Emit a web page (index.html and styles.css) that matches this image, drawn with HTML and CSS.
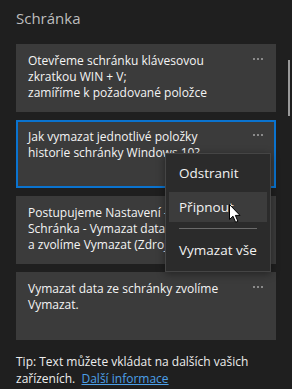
FILE: index.html
```html
<!DOCTYPE html>
<html lang="cs">
<head>
<meta charset="utf-8">
<link rel="stylesheet" href="styles.css">
</head>
<body>
<div class="panel">
  <main class="content">
    <h1 class="title">Schránka</h1>
    <ul class="clips">
      <li class="clip">
        <p class="clip-text">Otevřeme schránku klávesovou zkratkou WIN + V;<br>zamíříme k požadované položce</p>
        <span class="dots"><i></i><i></i><i></i></span>
      </li>
      <li class="clip clip-selected">
        <p class="clip-text">Jak vymazat jednotlivé položky historie schránky Windows 10?</p>
        <span class="dots"><i></i><i></i><i></i></span>
        <div class="menu">
          <div class="menu-item">Odstranit</div>
          <div class="menu-item menu-item-hover">Připnout</div>
          <div class="menu-sep"></div>
          <div class="menu-item">Vymazat vše</div>
        </div>
        <svg class="cursor" width="13" height="21" viewBox="0 0 13 21"><path d="M1.5 1.5 V16.5 L5 13.2 L7.6 19.3 L9.9 18.3 L7.4 12.4 H12 Z" fill="#fff" stroke="#000" stroke-width="1" stroke-linejoin="miter"/></svg>
      </li>
      <li class="clip">
        <p class="clip-text clamp">Postupujeme Nastavení - Systém - Schránka - Vymazat data ze schránky a zvolíme Vymazat (Zdroj: Microsoft)</p>
        <span class="dots"><i></i><i></i><i></i></span>
      </li>
      <li class="clip">
        <p class="clip-text">Vymazat data ze schránky zvolíme Vymazat.</p>
        <span class="dots"><i></i><i></i><i></i></span>
      </li>
    </ul>
    <p class="tip">Tip: Text můžete vkládat na dalších vašich zařízeních.&nbsp; <a href="#" class="tip-link">Další informace</a></p>
  </main>
  <div class="scrollbar"><div class="thumb"></div></div>
</div>
</body>
</html>
```
FILE: styles.css
```css
* { box-sizing: border-box; }
html, body {
  margin: 0;
  padding: 0;
  background: #1f1f1f;
  width: 292px;
  height: 389px;
  overflow: hidden;
  font-family: "Open Sans", "Noto Sans", sans-serif;
  color: #f2f2f2;
}
.panel {
  display: flex;
  height: 389px;
}
.content {
  width: 276px;
  padding: 8px 0 0 16px;
}
.title {
  margin: 0;
  font-size: 15px;
  font-weight: 400;
  line-height: 20px;
  color: #bdbdbd;
}
.clips {
  list-style: none;
  margin: 16px 0 0;
  padding: 0;
  display: flex;
  flex-direction: column;
  gap: 8px;
}
.clip {
  position: relative;
  display: flex;
  align-items: flex-start;
  height: 68px;
  background: #3b3b3b;
  padding: 9px 13px 0 12px;
}
.clip-selected {
  outline: 2px solid #0a73cf;
  outline-offset: -2px;
}
.clip-text {
  flex: 1;
  margin: 0;
  font-size: 12px;
  line-height: 16px;
  color: #f4f4f4;
  padding-right: 16px;
}
.clamp {
  display: -webkit-box;
  -webkit-line-clamp: 3;
  -webkit-box-orient: vertical;
  overflow: hidden;
}
.dots {
  display: flex;
  gap: 2px;
  margin-top: 5px;
}
.dots i {
  width: 2px;
  height: 2px;
  background: #8a8a8a;
}
.menu {
  position: absolute;
  left: 149px;
  top: 33px;
  width: 106px;
  z-index: 2;
  background: #2b2b2b;
  border: 1px solid #454545;
  padding: 4px 3px 6px;
  display: flex;
  flex-direction: column;
  gap: 4px;
  box-shadow: 0 2px 8px rgba(0,0,0,0.4);
}
.menu-item {
  height: 30px;
  line-height: 30px;
  padding-left: 10px;
  font-size: 13.5px;
  color: #f2f2f2;
}
.menu-item-hover {
  background: #3c3c3c;
}
.menu-sep {
  height: 1px;
  background: #6a6a6a;
  margin: 2px 10px;
}
.cursor {
  position: absolute;
  left: 212px;
  top: 83px;
  z-index: 3;
}
.tip {
  margin: 13px 0 0;
  font-size: 12px;
  line-height: 17px;
  color: #ededed;
}
.tip-link {
  color: #4ca0e8;
  text-decoration: underline;
}
.scrollbar {
  width: 16px;
  padding: 60px 0 0 12px;
}
.thumb {
  width: 2px;
  height: 56px;
  background: #9a9a9a;
}
```
